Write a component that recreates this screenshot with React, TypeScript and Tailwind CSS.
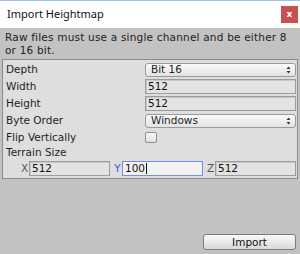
import React from 'react';

function Dropdown({ value }: { value: string }) {
  return (
    <div className="flex h-[14px] w-full items-center justify-between rounded-[3px] border border-[#9a9a9a] bg-gradient-to-b from-[#fbfbfb] to-[#e2e2e2] pl-[5px] pr-[4px] text-[10.5px] leading-none text-[#1e1e1e]">
      <span>{value}</span>
      <svg width="5" height="8" viewBox="0 0 5 8" className="text-[#333]">
        <path d="M2.5 0.5 L4.5 3 L0.5 3 Z M2.5 7.5 L4.5 5 L0.5 5 Z" fill="currentColor" />
      </svg>
    </div>
  );
}

function Field({ value, focused }: { value: string; focused?: boolean }) {
  return (
    <div
      className={
        focused
          ? 'flex h-[15px] w-full items-center border border-[#6f8ff0] bg-[#f2f2f2] pl-[2px] text-[10.5px] leading-none text-[#111]'
          : 'flex h-[15px] w-full items-center border border-[#9c9c9c] bg-[#e3e3e3] pl-[2px] text-[10.5px] leading-none text-[#111] shadow-[inset_1px_1px_0_#c8c8c8]'
      }
    >
      <span>{value}</span>
      {focused && <span className="ml-[1px] h-[11px] w-px bg-[#111]" />}
    </div>
  );
}

function Row({ label, children }: { label: string; children?: React.ReactNode }) {
  return (
    <div className="flex h-[17px] items-center">
      <div className="w-[142px] pl-[3px] text-[10.5px] text-[#1e1e1e]">{label}</div>
      <div className="flex w-[151px] items-center">{children}</div>
    </div>
  );
}

export default function App() {
  return (
    <div
      className="flex h-[254px] w-[300px] flex-col bg-[#c2c2c2]"
      style={{ fontFamily: '"DejaVu Sans", Verdana, sans-serif' }}
    >
      <div className="flex h-[28px] items-center justify-between border-t border-[#9cc6f2] bg-white pl-[7px] pr-[2px]">
        <span
          className="text-[11px] text-[#111]"
          style={{ fontFamily: '"Noto Sans", "Open Sans", sans-serif' }}
        >
          Import Heightmap
        </span>
        <div className="flex h-[17px] w-[17px] items-center justify-center bg-[#c75050] text-[9px] font-bold leading-none text-white">
          x
        </div>
      </div>

      <p className="px-[5px] pt-[3px] text-[10.5px] leading-[13px] tracking-[0.2px] text-[#222]">
        Raw files must use a single channel and be either 8 or 16 bit.
      </p>

      <div className="mx-[2px] mt-[2px] flex flex-col border border-[#8c8c8c] bg-[#dedede] pb-[1px] pt-[1px]">
        <Row label="Depth">
          <Dropdown value="Bit 16" />
        </Row>
        <Row label="Width">
          <Field value="512" />
        </Row>
        <Row label="Height">
          <Field value="512" />
        </Row>
        <Row label="Byte Order">
          <Dropdown value="Windows" />
        </Row>
        <Row label="Flip Vertically">
          <div className="h-[11px] w-[12px] rounded-[2px] border border-[#8e8e8e] bg-gradient-to-b from-[#f8f8f8] to-[#e0e0e0]" />
        </Row>
        <div className="flex h-[14px] items-center pl-[3px] text-[10.5px] text-[#1e1e1e]">Terrain Size</div>
        <div className="flex h-[17px] items-center gap-[3px] pl-[17px]">
          <div className="flex w-[90px] items-center">
            <span className="w-[10px] text-center text-[10.5px] text-[#555]">X</span>
            <Field value="512" />
          </div>
          <div className="flex w-[90px] items-center">
            <span className="w-[10px] text-center text-[10.5px] text-[#3a5ad8]">Y</span>
            <Field value="100" focused />
          </div>
          <div className="flex w-[90px] items-center">
            <span className="w-[10px] text-center text-[10.5px] text-[#555]">Z</span>
            <Field value="512" />
          </div>
        </div>
      </div>

      <div className="mt-auto flex justify-end pb-[4px] pr-[4px]">
        <button className="flex h-[16px] w-[93px] items-center justify-center rounded-[3px] border border-[#7c7c7c] bg-gradient-to-b from-[#fafafa] to-[#d9d9d9] text-[10.5px] leading-none text-[#111]">
          Import
        </button>
      </div>
    </div>
  );
}
